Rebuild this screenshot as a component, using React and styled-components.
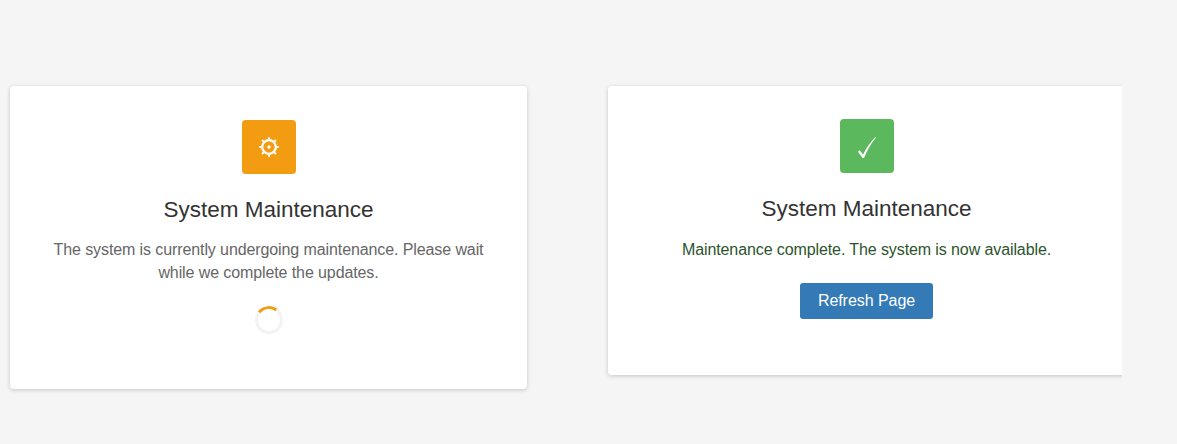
import React from 'react'
import styled, { createGlobalStyle } from 'styled-components'

const GlobalStyle = createGlobalStyle`
    html, body {
        margin: 0;
        padding: 0;
        background-color: #f5f5f5;
        font-family: "Liberation Sans", Arial, sans-serif;
    }
`

const Page = styled.div`
    width: 1122px;
    height: 444px;
    overflow: hidden;
    box-sizing: border-box;
    padding: 86px 0 0 10px;
    display: flex;
    align-items: flex-start;
    gap: 81px;
`

const Card = styled.div`
    flex: 0 0 auto;
    box-sizing: border-box;
    width: 517px;
    height: ${props => props.$height}px;
    padding-top: ${props => props.$top}px;
    background-color: #ffffff;
    border-radius: 4px;
    box-shadow: 0 1px 4px rgba(0, 0, 0, 0.2);
    display: flex;
    flex-direction: column;
    align-items: center;
`

const IconBox = styled.div`
    width: 54px;
    height: 54px;
    border-radius: 4px;
    background-color: ${props => props.$color};
    display: flex;
    align-items: center;
    justify-content: center;
`

const CheckSvg = styled.svg`
    margin-top: 3px;
`

const Title = styled.h2`
    margin: 22px 0 0;
    color: #333333;
    font-size: 22.5px;
    font-weight: 400;
    line-height: 28px;
`

const Message = styled.p`
    margin: ${props => props.$gap}px 0 0;
    width: 450px;
    color: ${props => props.$color};
    font-size: 16px;
    letter-spacing: -0.1px;
    line-height: 23px;
    text-align: center;
`

const Spinner = styled.div`
    box-sizing: border-box;
    width: 28px;
    height: 28px;
    margin-top: 22px;
    border-radius: 50%;
    border: 3px solid #f3f3f3;
    border-top-color: #f39c12;
    transform: rotate(-8deg);
`

const RefreshButton = styled.button`
    box-sizing: border-box;
    width: 133px;
    height: 36px;
    margin-top: 22px;
    padding: 0;
    border: 0;
    border-radius: 3px;
    background-color: #337ab7;
    color: #ffffff;
    font-family: inherit;
    font-size: 16px;
    letter-spacing: -0.05px;
`

function GearIcon() {
    const teeth = [0, 45, 90, 135, 180, 225, 270, 315]
    return (
        <svg width="20" height="20" viewBox="0 0 20 20" fill="none">
            <circle cx="10" cy="10" r="6.8" stroke="#fff" strokeWidth="2.2" />
            <circle cx="10" cy="10" r="1.7" fill="#fff" />
            {teeth.map(angle => (
                <rect key={angle} x="9" y="0.2" width="2" height="2.6" fill="#fff" transform={`rotate(${angle} 10 10)`} />
            ))}
        </svg>
    )
}

function CheckIcon() {
    return (
        <CheckSvg width="18" height="21" viewBox="0 0 18 21">
            <path d="M0 14.8 L1.6 13.3 L5.2 17.4 C8 11.5 12 5.5 17.4 0 L18 0.5 C13 6.5 9 13.5 6 21 L4.6 21 Z" fill="#fff" />
        </CheckSvg>
    )
}

export default function App() {
    return (
        <>
            <GlobalStyle />
            <Page>
                <Card $height={303} $top={34}>
                    <IconBox $color="#f39c12"><GearIcon /></IconBox>
                    <Title>System Maintenance</Title>
                    <Message $color="#666666" $gap={14}>
                        The system is currently undergoing maintenance. Please wait while we complete the updates.
                    </Message>
                    <Spinner />
                </Card>
                <Card $height={289} $top={33}>
                    <IconBox $color="#5cb85c"><CheckIcon /></IconBox>
                    <Title>System Maintenance</Title>
                    <Message $color="#2b542c" $gap={15}>
                        Maintenance complete. The system is now available.
                    </Message>
                    <RefreshButton>Refresh Page</RefreshButton>
                </Card>
            </Page>
        </>
    )
}
